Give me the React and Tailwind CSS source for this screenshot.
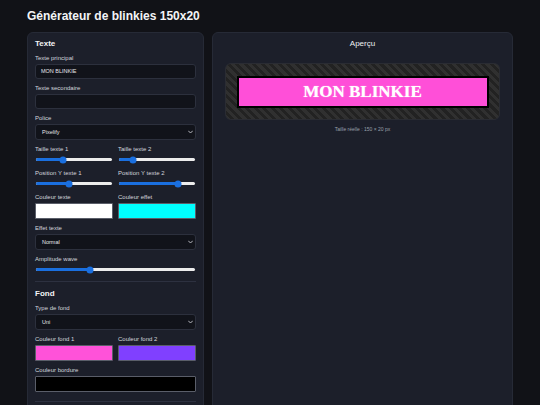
import React from "react";

const Label = ({ children }) => (
  <div className="text-[6px] leading-[8px] text-[#d4d6dc]">{children}</div>
);

const Chevron = () => (
  <svg width="5" height="4" viewBox="0 0 10 6" className="shrink-0">
    <path d="M1 1l4 4 4-4" fill="none" stroke="#c8cad0" strokeWidth="1.8" strokeLinecap="round" strokeLinejoin="round" />
  </svg>
);

const TextInput = ({ value }) => (
  <div className="h-[15px] rounded-[3px] border border-[#2c303d] bg-[#11131a] px-[5px] flex items-center text-[5.5px] text-[#e5e7eb]">
    {value}
  </div>
);

const Select = ({ value }) => (
  <div className="h-[16px] rounded-[3px] border border-[#2c303d] bg-[#11131a] pl-[6px] pr-[2px] flex items-center justify-between text-[5.5px] text-[#e5e7eb]">
    <span>{value}</span>
    <Chevron />
  </div>
);

const Slider = ({ pct }) => (
  <div className="relative h-[9px] flex items-center px-[1px]">
    <div className="relative h-[3px] w-full rounded-full bg-[#ececec]">
      <div className="absolute left-0 top-0 h-[3px] rounded-full bg-[#1a6fdf]" style={{ width: `${pct}%` }} />
      <div
        className="absolute top-1/2 h-[7px] w-[7px] -translate-x-1/2 -translate-y-1/2 rounded-full bg-[#1a6fdf]"
        style={{ left: `${pct}%` }}
      />
    </div>
  </div>
);

const Swatch = ({ color }) => (
  <div className={`h-[16px] rounded-[1px] border border-[#5a5e69] ${color}`} />
);

const Field = ({ label, children }) => (
  <div className="flex flex-col gap-[2px]">
    <Label>{label}</Label>
    {children}
  </div>
);

export default function App() {
  return (
    <div className="h-screen overflow-hidden bg-[#111217] font-['Liberation_Sans',Arial,sans-serif] text-white">
      <div className="px-[27px] pt-[9px]">
        <h1 className="text-[12px] leading-[14px] font-bold text-[#f3f4f6]">Générateur de blinkies 150x20</h1>
        <div className="mt-[9px] flex gap-[8px] items-stretch">
          {/* Left panel */}
          <div className="w-[177px] shrink-0 rounded-[6px] border border-[#262a36] bg-[#1c1f2a] px-[7px] pt-[6px] pb-[10px]">
            <div className="flex flex-col gap-[5px]">
              <div className="text-[8px] leading-[10px] font-bold text-[#f3f4f6]">Texte</div>
              <Field label="Texte principal">
                <TextInput value="MON BLINKIE" />
              </Field>
              <Field label="Texte secondaire">
                <TextInput value="" />
              </Field>
              <Field label="Police">
                <Select value="Pixelify" />
              </Field>
              <div className="grid grid-cols-2 gap-x-[5px] gap-y-[5px]">
                <Field label="Taille texte 1">
                  <Slider pct={35} />
                </Field>
                <Field label="Taille texte 2">
                  <Slider pct={19} />
                </Field>
                <Field label="Position Y texte 1">
                  <Slider pct={44} />
                </Field>
                <Field label="Position Y texte 2">
                  <Slider pct={77} />
                </Field>
                <Field label="Couleur texte">
                  <Swatch color="bg-white" />
                </Field>
                <Field label="Couleur effet">
                  <Swatch color="bg-[#00ffff]" />
                </Field>
              </div>
              <Field label="Effet texte">
                <Select value="Normal" />
              </Field>
              <Field label="Amplitude wave">
                <Slider pct={34} />
              </Field>
            </div>

            <div className="mt-[7px] border-t border-[#2d3140] pt-[7px] flex flex-col gap-[5px]">
              <div className="text-[8px] leading-[10px] font-bold text-[#f3f4f6]">Fond</div>
              <Field label="Type de fond">
                <Select value="Uni" />
              </Field>
              <div className="grid grid-cols-2 gap-x-[5px]">
                <Field label="Couleur fond 1">
                  <Swatch color="bg-[#ff52d9]" />
                </Field>
                <Field label="Couleur fond 2">
                  <Swatch color="bg-[#8040ff]" />
                </Field>
              </div>
              <Field label="Couleur bordure">
                <Swatch color="bg-black" />
              </Field>
            </div>

            <div className="mt-[9px] border-t border-[#2d3140] h-[60px]" />
          </div>

          {/* Right panel */}
          <div className="flex-1 w-[300px] rounded-[6px] border border-[#262a36] bg-[#1c1f2a] px-[12px] pt-[6px]">
            <div className="text-center text-[8px] leading-[10px] text-[#eef0f3]">Aperçu</div>
            <div className="mt-[14px] flex items-center justify-center rounded-[6px] border border-[#2a2c33] bg-[repeating-linear-gradient(45deg,#303030_0px,#303030_3px,#222222_3px,#222222_6px)] h-[57px]">
              <div className="flex h-[32px] w-[252px] items-center justify-center border-2 border-black bg-[#ff4fd8]">
                <span className="font-['Liberation_Serif','Times_New_Roman',serif] text-[17px] font-bold leading-none text-white [text-shadow:0_0_1px_#ffd6f5]">
                  MON BLINKIE
                </span>
              </div>
            </div>
            <div className="mt-[6px] text-center text-[5px] leading-[7px] text-[#9aa0ab]">Taille réelle : 150 × 20 px</div>
          </div>
        </div>
      </div>
    </div>
  );
}
